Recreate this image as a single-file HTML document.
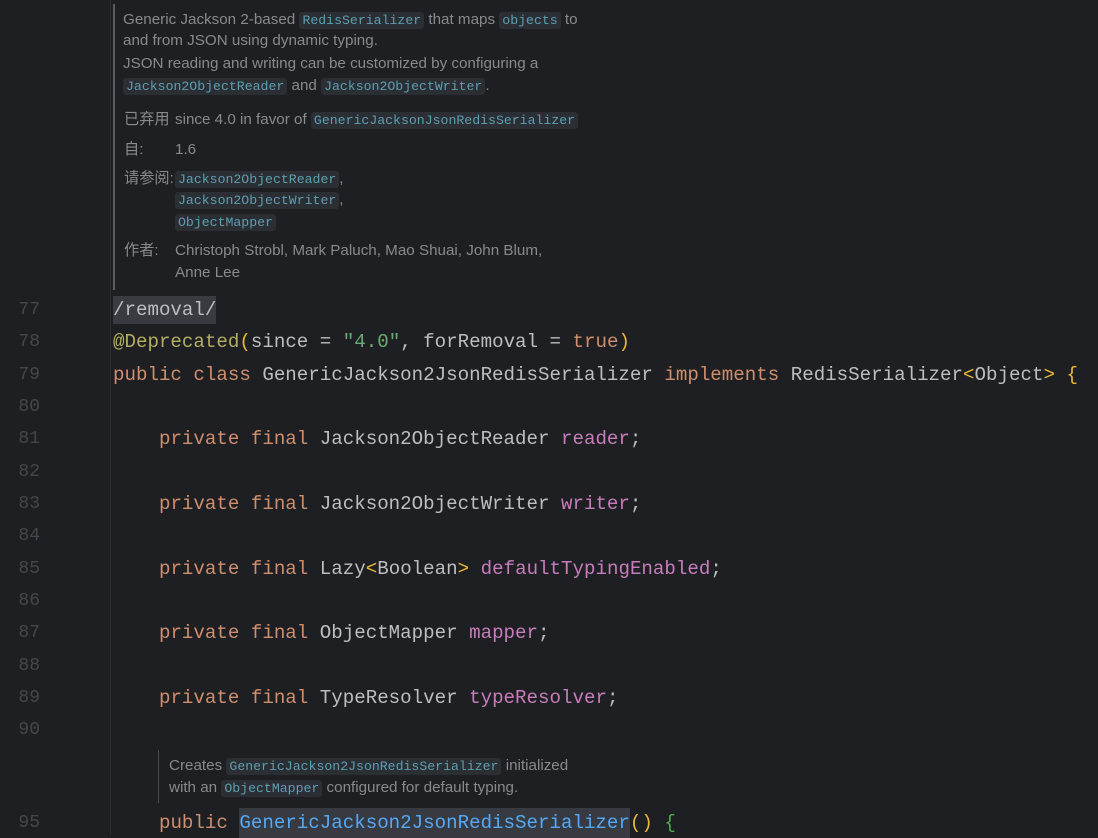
<!DOCTYPE html>
<html><head><meta charset="utf-8"><style>
body{margin:0;width:1098px;height:835px;background:#1e1f22;overflow:hidden;position:relative;font-family:"Liberation Sans","Noto Sans CJK SC",sans-serif}
.ln{position:absolute;left:0;width:40px;text-align:right;font:18px "Liberation Mono",monospace;color:#44474d;line-height:24px}
.c{position:absolute;left:113px;font:19.15px "Liberation Mono",monospace;color:#bcbec4;white-space:pre;line-height:24px}
.sep{position:absolute;left:110px;top:0;width:1px;height:835px;background:#2b2d30}
.d{position:absolute;font-size:15.2px;color:#878a8f;white-space:pre;line-height:20px}
.k{color:#cf8e6d}.f{color:#c77dbb}.a{color:#b3ae60}.s{color:#6aab73}.y{color:#e8ba36}.m{color:#56a8f5}.g{color:#54a857}
.ch{font:13.2px "Liberation Mono",monospace;color:#5c9fb3;background:#2b2e33;border-radius:3px;padding:1px 3px}
.bar{position:absolute;width:2px;background:#4a4c50}
</style></head><body>
<div class="sep"></div>
<div class="bar" style="left:113px;top:4px;height:286px;background:#5a5d61"></div>
<div class="d" style="left:123px;top:10px">Generic Jackson 2-based <span class="ch">RedisSerializer</span> that maps <span class="ch">objects</span> to</div>
<div class="d" style="left:123px;top:31px">and from JSON using dynamic typing.</div>
<div class="d" style="left:123px;top:54px">JSON reading and writing can be customized by configuring a</div>
<div class="d" style="left:123px;top:76px"><span class="ch">Jackson2ObjectReader</span> and <span class="ch">Jackson2ObjectWriter</span>.</div>
<div class="d" style="left:124px;top:110px">已弃用</div><div class="d" style="left:175px;top:110px">since 4.0 in favor of <span class="ch">GenericJacksonJsonRedisSerializer</span></div>
<div class="d" style="left:124px;top:140px">自:</div><div class="d" style="left:175px;top:140px">1.6</div>
<div class="d" style="left:124px;top:169px">请参阅:</div>
<div class="d" style="left:175px;top:169px"><span class="ch">Jackson2ObjectReader</span>,</div>
<div class="d" style="left:175px;top:190px"><span class="ch">Jackson2ObjectWriter</span>,</div>
<div class="d" style="left:175px;top:212px"><span class="ch">ObjectMapper</span></div>
<div class="d" style="left:124px;top:241px">作者:</div>
<div class="d" style="left:175px;top:241px">Christoph Strobl, Mark Paluch, Mao Shuai, John Blum,</div>
<div class="d" style="left:175px;top:263px">Anne Lee</div>

<div class="ln" style="top:298px">77</div><div class="c" style="top:298px"><span style="background:#393b40;padding:3px 0">/removal/</span></div>
<div class="ln" style="top:330px">78</div><div class="c" style="top:330px"><span class="a">@Deprecated</span><span class="y">(</span>since = <span class="s">"4.0"</span>, forRemoval = <span class="k">true</span><span class="y">)</span></div>
<div class="ln" style="top:363px">79</div><div class="c" style="top:363px"><span class="k">public class </span>GenericJackson2JsonRedisSerializer <span class="k">implements </span>RedisSerializer<span class="y">&lt;</span>Object<span class="y">&gt;</span> <span class="y">{</span></div>
<div class="ln" style="top:395px">80</div>
<div class="ln" style="top:427px">81</div><div class="c" style="top:427px">    <span class="k">private final </span>Jackson2ObjectReader <span class="f">reader</span>;</div>
<div class="ln" style="top:460px">82</div>
<div class="ln" style="top:492px">83</div><div class="c" style="top:492px">    <span class="k">private final </span>Jackson2ObjectWriter <span class="f">writer</span>;</div>
<div class="ln" style="top:524px">84</div>
<div class="ln" style="top:557px">85</div><div class="c" style="top:557px">    <span class="k">private final </span>Lazy<span class="y">&lt;</span>Boolean<span class="y">&gt;</span> <span class="f">defaultTypingEnabled</span>;</div>
<div class="ln" style="top:589px">86</div>
<div class="ln" style="top:621px">87</div><div class="c" style="top:621px">    <span class="k">private final </span>ObjectMapper <span class="f">mapper</span>;</div>
<div class="ln" style="top:654px">88</div>
<div class="ln" style="top:686px">89</div><div class="c" style="top:686px">    <span class="k">private final </span>TypeResolver <span class="f">typeResolver</span>;</div>
<div class="ln" style="top:718px">90</div>

<div class="bar" style="left:158px;top:750px;height:53px;width:1px"></div>
<div class="d" style="left:169px;top:756px">Creates <span class="ch">GenericJackson2JsonRedisSerializer</span> initialized</div>
<div class="d" style="left:169px;top:778px">with an <span class="ch">ObjectMapper</span> configured for default typing.</div>

<div class="ln" style="top:811px">95</div><div class="c" style="top:811px">    <span class="k">public </span><span class="m" style="background:#373b41;padding:4px 0">GenericJackson2JsonRedisSerializer</span><span class="y">()</span> <span class="g">{</span></div>
</body></html>
